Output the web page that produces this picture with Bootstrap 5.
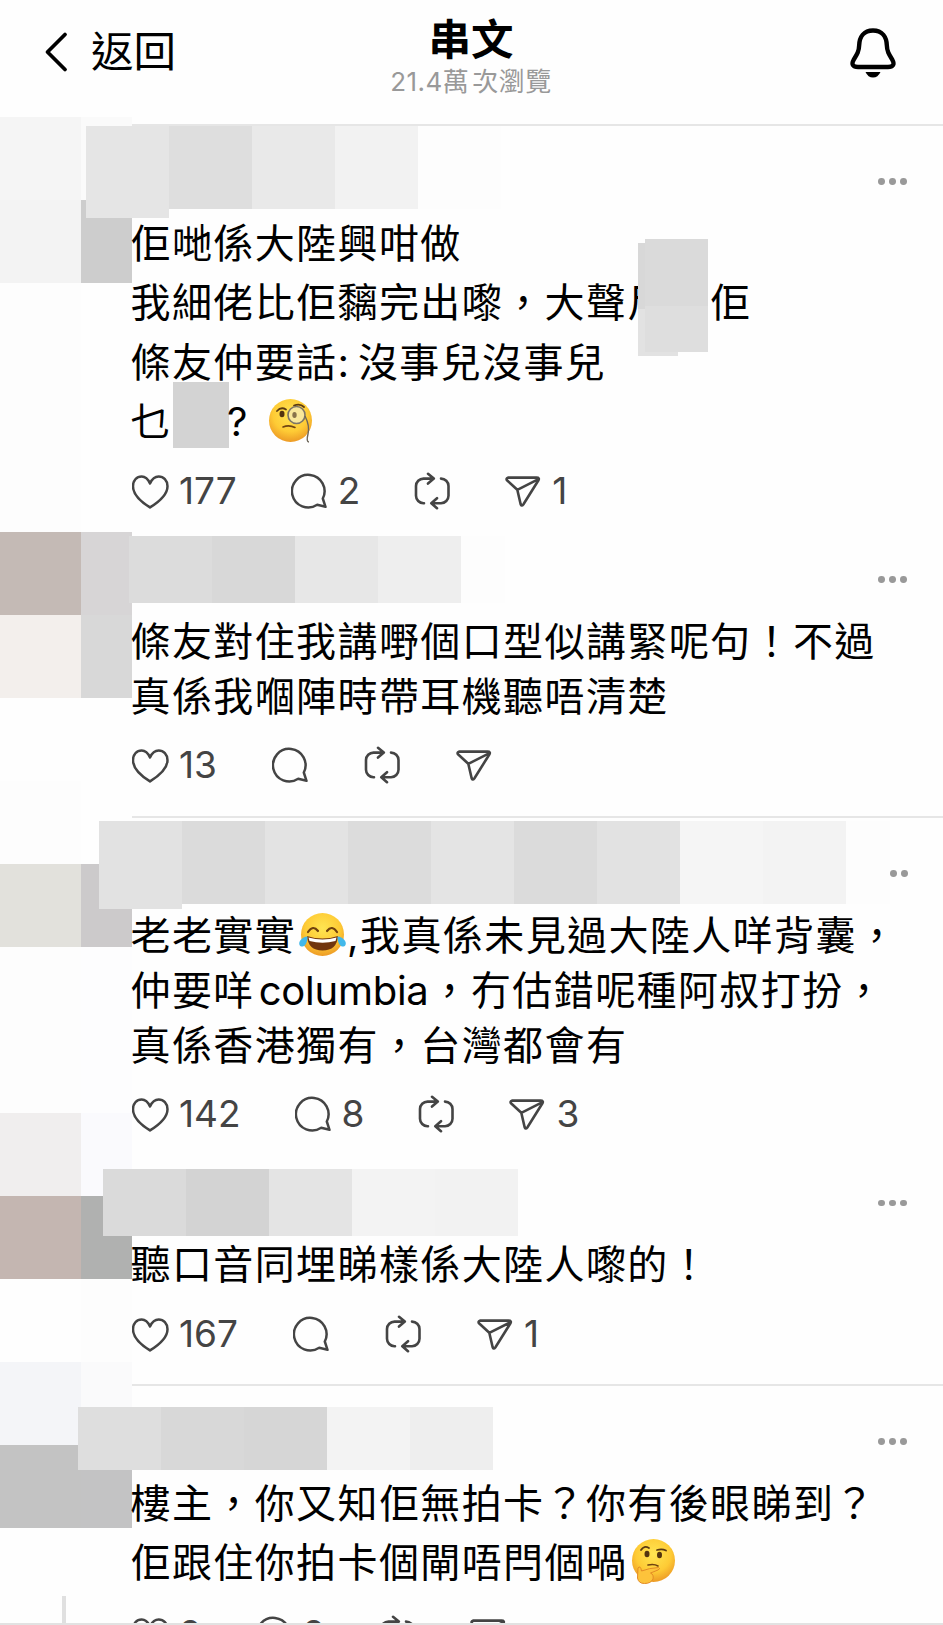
<!DOCTYPE html>
<html lang="zh-Hant">
<head>
    <meta charset="UTF-8">
    <meta name="viewport" content="width=device-width, initial-scale=1">
    <title>串文</title>
    <link href="https://cdn.jsdelivr.net/npm/bootstrap@5.3.2/dist/css/bootstrap.min.css" rel="stylesheet">
    <style>
        body {
            font-family: Inter, "Noto Sans CJK TC", sans-serif;
            color: #000;
            background: #fefefe;
        }
        .screen { width: 943px; height: 1625px; }
        .topbar { height: 117px; }
        .topbar-side { width: 380px; }
        .back-link { padding: 2px 0 0 44px; font-size: 42.5px; line-height: 100px; gap: 22px; }
        .page-title { font-size: 42.5px; line-height: 50px; padding-top: 15px; margin-left: -1px; }
        .views { font-size: 26px; line-height: 34px; color: #999; letter-spacing: .5px; white-space: nowrap; margin-left: -1px; }
        .views b { font-weight: 400; margin-right: 3px; }
        .bell { margin: 27px 46px 0 0; }

        /* avatars column */
        .rail { width: 132px; }
        .rail-row { height: 83px; }
        .rail-row i:first-child { width: 81px; }
        .rail-row i:last-child { width: 51px; }
        .rail-gap { height: 68px; }
        .thread-line { width: 4px; height: 30px; margin-left: 62px; background: #e0e0e0; }

        .feed { width: 811px; padding-top: 7px; }
        .ruled { border-top: 2px solid #e6e6e6; }
        .p1 { height: 412px; }
        .p2 { height: 280px; }
        .p3 { height: 353px; }
        .p4 { height: 215px; }
        .p5 { height: 241px; }
        .p1 .who { height: 88px; }
        .p2 .who { height: 77.5px; }
        .p3 .who { height: 89.5px; padding-top: 3px; }
        .p4 .who { height: 68px; }
        .p5 .who { height: 87.5px; padding-top: 21px; }

        .pixels { height: 67px; position: relative; z-index: 1; }
        .pixels i { width: 83px; height: 100%; }
        .p1 .pixels { height: 83px; margin-left: -46px; }
        .p2 .pixels { margin-left: -3px; }
        .p3 .pixels { height: 83px; margin-left: -33px; }
        .p4 .pixels { margin-left: -29px; }
        .p5 .pixels { height: 63px; margin-left: -54px; }
        .pixels .half { width: 44px; }
        .p1 .pixels i:first-child { height: 92px; }
        .p3 .pixels i:first-child { height: 88px; }

        .more { margin-right: 36px; gap: 4.3px; }
        .more i { width: 6.8px; height: 6.8px; border-radius: 50%; background: #999; }
        .p1 .more { margin-top: 52px; }
        .p2 .more { margin-top: 40px; }
        .p3 .more { margin-top: 49px; }
        .p4 .more { margin-top: 30.5px; }
        .p5 .more { margin-top: 31px; }

        .words { margin-left: -1.5px; font-size: 40px; letter-spacing: 1.4px; line-height: 55px; white-space: nowrap; }
        .words.loose { line-height: 59.3px; }
        .p1 .words { height: 237px; }
        .p3 .words { height: 165px; }
        .words svg { vertical-align: -8px; }
        .monocle { margin-left: 7px; }
        .latin { margin: 0 1px 0 4px; letter-spacing: -.25px; }
        .tight { letter-spacing: -1.2px; }

        .cover { display: inline-block; position: relative; width: 82.8px; }
        .cover i { position: absolute; }
        .cover .a { left: 11px; top: -30px; width: 40px; height: 66px; background: #d8d8d8; }
        .cover .b { left: 11px; top: 36px; width: 40px; height: 47px; background: #e2e2e2; }
        .cover .c { left: 18px; top: -34px; width: 63px; height: 67px; background: #dadada; }
        .cover .d { left: 18px; top: 33px; width: 63px; height: 46px; background: #dedede; }
        .cover-sm { display: inline-block; width: 56px; height: 66px; margin: -30px -2px -12px 1px; background: #d3d3d3; }

        .acts { height: 40px; margin-top: 21.5px; color: #444; font-size: 37px; line-height: 40px; }
        .p1 .acts { margin-top: 20px; }
        .acts svg { width: 37px; height: 38px; flex: none; }
        .acts span { display: flex; align-items: center; gap: 10px; margin-right: 54px; }
        .p2 .acts span, .p4 .acts span { margin-right: 55px; }
        .end-line { height: 2px; background: #e2e2e2; left: 0; right: 0; bottom: 0; }
    </style>
</head>
<body>
    <!-- icons -->
    <svg class="d-none">
        <g id="heart" fill="none" stroke="currentColor" stroke-width="2.5" stroke-linejoin="round">
            <path d="M18 11.5C16 7 13 4.500 9.700 4.500C4.500 4.500 1 8.500 1 14.200C1 22.500 8.500 29.500 18 35.400C27.500 29.500 35.500 22.500 35.500 14.200C35.500 8.500 31.500 4.500 26.700 4.500C23 4.500 20 7 18 11.500Z"/>
        </g>
        <g id="reply" fill="none" stroke="currentColor" stroke-width="2.5" stroke-linejoin="round">
            <path d="M34.500 34.800L26.200 32.800A16.300 16.300 0 1 1 31.800 26.500Z"/>
        </g>
        <g id="repost" fill="none" stroke="currentColor" stroke-width="2.6" stroke-linecap="round" stroke-linejoin="round">
            <path d="M10 31.200H9.500A7.500 7.500 0 0 1 2 23.700V14A7.500 7.500 0 0 1 9.500 6.600H19.500M14 1.800L19.800 6.600L14 11.600"/>
            <path d="M27 6.600A7.500 7.500 0 0 1 34.500 14V23.700A7.500 7.500 0 0 1 27 31.200H17.500M23 26.200L17.300 31.200L23 36.200"/>
        </g>
        <g id="send" fill="none" stroke="currentColor" stroke-width="2.6" stroke-linejoin="round" stroke-linecap="round">
            <path d="M3 5.600H31.500Q35 5.600 33.300 8.500L18.300 32.500Q16.500 34.800 15.600 32L12.300 17.800L2 8.300Q.8 6.500 3 5.600ZM12.300 17.800L33.500 7.200"/>
        </g>
    </svg>

    <div class="screen position-relative overflow-hidden">
        <header class="topbar d-flex align-items-start justify-content-between">
            <div class="topbar-side back-link d-flex align-items-center">
                <svg width="25" height="42" fill="none" stroke="#000" stroke-width="3.800" stroke-linecap="round" stroke-linejoin="round"><path d="M21 3.500L3.500 21L21 38.500"/></svg>
                <span>返回</span>
            </div>
            <div class="text-center">
                <div class="page-title fw-bold">串文</div>
                <div class="views">21.4<b>萬</b>次瀏覽</div>
            </div>
            <div class="topbar-side d-flex justify-content-end">
                <svg class="bell" width="48" height="52"><path d="M24 3.500C14.500 3.500 10.500 10.500 10.200 18C10 24.500 8 27.500 4.800 32.500C2 37.500 4 40 9 40H39C44 40 46 37.500 43.200 32.500C40 27.500 38 24.500 37.800 18C37.500 10.500 33.500 3.500 24 3.500Z" fill="none" stroke="#000" stroke-width="4.400"/><path d="M16.500 45H31.500Q29 50.500 24 50.500T16.500 45Z"/></svg>
            </div>
        </header>

        <div class="d-flex">
            <div class="rail flex-shrink-0">
                <div class="rail-row d-flex"><i style="background:#f5f5f5"></i><i style="background:#fafafa"></i></div>
                <div class="rail-row d-flex"><i style="background:#f3f3f3"></i><i style="background:#cdcdcd"></i></div>
                <div class="rail-row d-flex"><i style="background:#fdfdfd"></i><i></i></div>
                <div class="rail-row d-flex"><i style="background:#fdfdfd"></i><i></i></div>
                <div class="rail-row d-flex"><i style="background:#fdfdfd"></i><i></i></div>
                <div class="rail-row d-flex"><i style="background:#c4bab5"></i><i style="background:#d7d5d6"></i></div>
                <div class="rail-row d-flex"><i style="background:#f3efec"></i><i style="background:#d8d8d8"></i></div>
                <div class="rail-row d-flex"><i></i><i></i></div>
                <div class="rail-row d-flex"><i style="background:#fdfdfd"></i><i></i></div>
                <div class="rail-row d-flex"><i style="background:#e2e1dc"></i><i style="background:#cccacb"></i></div>
                <div class="rail-row d-flex"><i style="background:#fdfdfd"></i><i style="background:#fdfdfe"></i></div>
                <div class="rail-row d-flex"><i style="background:#fdfdfd"></i><i style="background:#fdfdfe"></i></div>
                <div class="rail-row d-flex"><i style="background:#f0eeee"></i><i style="background:#fafafd"></i></div>
                <div class="rail-row d-flex"><i style="background:#c4b6b1"></i><i style="background:#b0b1b0"></i></div>
                <div class="rail-row d-flex"><i></i><i style="background:#fdfdfd"></i></div>
                <div class="rail-row d-flex"><i style="background:#f4f5f8"></i><i style="background:#fafafb"></i></div>
                <div class="rail-row d-flex"><i style="background:#c3c3c3"></i><i style="background:#c3c3c4"></i></div>
                <div class="rail-gap"></div>
                <div class="thread-line"></div>
            </div>

            <main class="feed">
                <article class="p1 ruled">
                    <div class="who d-flex justify-content-between align-items-start">
                        <div class="pixels d-flex"><i style="background:#e5e5e5"></i><i style="background:#dedede"></i><i style="background:#e9e9e9"></i><i style="background:#f2f2f2"></i><i style="background:#fdfdfd"></i></div>
                        <div class="more d-flex"><i></i><i></i><i></i></div>
                    </div>
                    <div class="words loose">佢哋係大陸興咁做<br>我細佬比佢黐完出嚟，大聲<span class="cover">尸<i class="a"></i><i class="b"></i><i class="c"></i><i class="d"></i></span>佢<br>條友仲要話<span class="tight">: </span>沒事兒沒事兒<br>乜<span class="cover-sm"></span>?
                        <svg class="monocle" width="46" height="46" viewBox="0 0 46 46">
                            <defs><radialGradient id="skin" cx=".5" cy=".35" r=".68"><stop offset="0" stop-color="#ffe552"/><stop offset=".6" stop-color="#fecb35"/><stop offset="1" stop-color="#eb9524"/></radialGradient></defs>
                            <circle cx="22.500" cy="22.500" r="21.500" fill="url(#skin)"/>
                            <path d="M9 13Q13 8.500 18 11.500M26 7.500Q32 5 36 9" fill="none" stroke="#5b3a12" stroke-width="1.800" stroke-linecap="round"/>
                            <ellipse cx="14" cy="16" rx="2.500" ry="3.200" fill="#53340f"/>
                            <circle cx="28.500" cy="17" r="8.500" fill="#f8e79b" stroke="#7c7467" stroke-width="1.600"/>
                            <ellipse cx="26.500" cy="17" rx="2.200" ry="3" fill="#87724b"/>
                            <path d="M15 29Q21 26.500 27 29.500" fill="none" stroke="#704411" stroke-width="1.600" stroke-linecap="round"/>
                            <path d="M37 18Q42 28 40 36T41 44" fill="none" stroke="#6c6558" stroke-width="1.400"/>
                        </svg></div>
                    <div class="acts d-flex align-items-center">
                        <span><svg><use href="#heart"/></svg>177</span>
                        <span><svg><use href="#reply"/></svg>2</span>
                        <span><svg><use href="#repost"/></svg></span>
                        <span><svg><use href="#send"/></svg>1</span>
                    </div>
                </article>

                <article class="p2">
                    <div class="who d-flex justify-content-between align-items-start">
                        <div class="pixels d-flex"><i style="background:#dcdcdc"></i><i style="background:#d8d8d8"></i><i style="background:#e7e7e7"></i><i style="background:#eee"></i><i class="half" style="background:#fdfdfd"></i></div>
                        <div class="more d-flex"><i></i><i></i><i></i></div>
                    </div>
                    <div class="words">條友對住我講嘢個口型似講緊呢句！不過<br>真係我嗰陣時帶耳機聽唔清楚</div>
                    <div class="acts d-flex align-items-center">
                        <span><svg><use href="#heart"/></svg>13</span>
                        <span><svg><use href="#reply"/></svg></span>
                        <span><svg><use href="#repost"/></svg></span>
                        <span><svg><use href="#send"/></svg></span>
                    </div>
                </article>

                <article class="p3 ruled">
                    <div class="who d-flex justify-content-between align-items-start">
                        <div class="pixels d-flex"><i style="background:#e2e2e2"></i><i style="background:#dbdbdb"></i><i style="background:#e3e3e3"></i><i style="background:#dcdcdc"></i><i style="background:#e4e4e4"></i><i style="background:#dbdbdb"></i><i style="background:#e2e2e2"></i><i style="background:#f5f5f5"></i><i style="background:#f3f3f3"></i><i class="half" style="background:#fdfdfd"></i></div>
                        <div class="more d-flex"><i></i><i></i></div>
                    </div>
                    <div class="words">老老實實<svg width="51" height="46" viewBox="0 0 51 46">
                            <circle cx="26.500" cy="22.500" r="21.500" fill="url(#skin)"/>
                            <path d="M12 20Q17 12.500 22 19M31 19Q36 12.500 41 20" fill="none" stroke="#70410d" stroke-width="2.200" stroke-linecap="round"/>
                            <path d="M11 24Q26.500 29 42 24Q41 38.500 26.500 38.500T11 24Z" fill="#70350e"/>
                            <path d="M12.500 25.500Q26.500 29.500 40.500 25.500L39.500 29Q26.500 32.500 13.500 29Z" fill="#fff"/>
                            <path d="M11.500 24.500C6 25 2 29.500 3.500 33C5.500 36.500 11.500 34.500 11.500 24.500ZM41.500 24.500C47 25 51 29.500 49.500 33C47.500 36.500 41.500 34.500 41.500 24.500Z" fill="#42b8ea"/>
                        </svg>,我真係未見過大陸人咩背囊，<br>仲要咩<span class="latin">columbia</span>，冇估錯呢種阿叔打扮，<br>真係香港獨有，台灣都會有</div>
                    <div class="acts d-flex align-items-center">
                        <span><svg><use href="#heart"/></svg>142</span>
                        <span><svg><use href="#reply"/></svg>8</span>
                        <span><svg><use href="#repost"/></svg></span>
                        <span><svg><use href="#send"/></svg>3</span>
                    </div>
                </article>

                <article class="p4">
                    <div class="who d-flex justify-content-between align-items-start">
                        <div class="pixels d-flex"><i style="background:#dadada"></i><i style="background:#d3d3d3"></i><i style="background:#e4e4e4"></i><i style="background:#f3f3f3"></i><i style="background:#f2f2f2"></i></div>
                        <div class="more d-flex"><i></i><i></i><i></i></div>
                    </div>
                    <div class="words">聽口音同埋睇樣係大陸人嚟的！</div>
                    <div class="acts d-flex align-items-center">
                        <span><svg><use href="#heart"/></svg>167</span>
                        <span><svg><use href="#reply"/></svg></span>
                        <span><svg><use href="#repost"/></svg></span>
                        <span><svg><use href="#send"/></svg>1</span>
                    </div>
                </article>

                <article class="p5 ruled">
                    <div class="who d-flex justify-content-between align-items-start">
                        <div class="pixels d-flex"><i style="background:#dedede"></i><i style="background:#d8d8d8"></i><i style="background:#d6d6d6"></i><i style="background:#f3f3f3"></i><i style="background:#eee"></i></div>
                        <div class="more d-flex"><i></i><i></i><i></i></div>
                    </div>
                    <div class="words loose">樓主，你又知佢無拍卡？你有後眼睇到？<br>佢跟住你拍卡個閘唔閂個喎<svg width="50" height="47" viewBox="-2 0 50 47">
                            <circle cx="24.500" cy="22.500" r="21.500" fill="url(#skin)"/>
                            <path d="M12 12Q15 7 20 10M28 12Q33 10.500 37 12.500" fill="none" stroke="#5b3a12" stroke-width="1.800" stroke-linecap="round"/>
                            <ellipse cx="18" cy="16" rx="2.500" ry="3.200" fill="#53340f"/>
                            <ellipse cx="30.500" cy="17" rx="2.500" ry="3.200" fill="#53340f"/>
                            <path d="M19 27Q25 25.500 29 28" fill="none" stroke="#704411" stroke-width="1.600" stroke-linecap="round"/>
                            <path d="M9 30Q11.500 27 12.500 33Q20 30 29.500 29.500Q32 30.500 29 32L21.500 35Q25 36.500 24 41Q22 45.500 15.500 45.500Q9.500 45.500 8.500 40Z" fill="#fdc33b" stroke="#e38b25" stroke-width="1"/>
                        </svg></div>
                    <div class="acts d-flex align-items-center">
                        <span><svg><use href="#heart"/></svg>2</span>
                        <span><svg><use href="#reply"/></svg>2</span>
                        <span><svg><use href="#repost"/></svg></span>
                        <span><svg><use href="#send"/></svg></span>
                    </div>
                </article>
            </main>
        </div>
        <div class="end-line position-absolute"></div>
    </div>

    <script src="https://cdn.jsdelivr.net/npm/bootstrap@5.3.2/dist/js/bootstrap.bundle.min.js"></script>
</body>
</html>
